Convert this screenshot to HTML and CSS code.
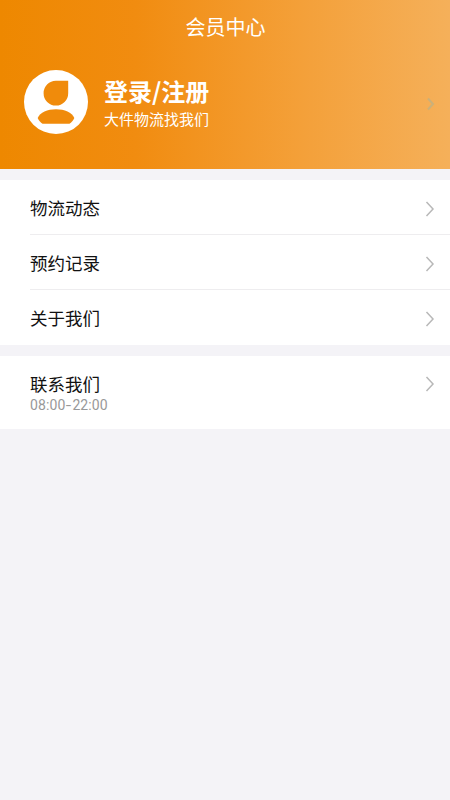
FILE: index.html
```html
<!DOCTYPE html>
<html lang="zh-CN">
<head>
<meta charset="utf-8">
<title>会员中心</title>
<link rel="stylesheet" href="styles.css">
</head>
<body>
<header class="header">
  <h1 class="title">会员中心</h1>
  <div class="profile">
    <svg class="avatar" viewBox="0 0 64 64">
      <circle cx="32" cy="32" r="32" fill="#fff"/>
      <path class="figure" d="M44.2 10.8H32A12.3 12.4 0 1 0 44.2 23.2Z"/>
      <path class="figure" d="M13.7 48C16 42.2 23.5 39.3 32 39.3S48 42.2 50.3 48C49.6 50.2 47.8 52.2 45.5 53.8H18.5C16.2 52.2 14.4 50.2 13.7 48Z"/>
    </svg>
    <div class="account">
      <div class="login">登录/注册</div>
      <div class="slogan">大件物流找我们</div>
    </div>
    <svg class="chevron chevron-header" viewBox="0 0 10 16"><path d="M2 2.5 7 8 2 13.5"/></svg>
  </div>
</header>
<main>
  <section class="group">
    <div class="row"><span>物流动态</span><svg class="chevron" viewBox="0 0 10 16"><path d="M1.5 1 8 8 1.5 15"/></svg></div>
    <div class="row"><span>预约记录</span><svg class="chevron" viewBox="0 0 10 16"><path d="M1.5 1 8 8 1.5 15"/></svg></div>
    <div class="row"><span>关于我们</span><svg class="chevron" viewBox="0 0 10 16"><path d="M1.5 1 8 8 1.5 15"/></svg></div>
  </section>
  <section class="group contact">
    <div class="contact-line"><span>联系我们</span><svg class="chevron" viewBox="0 0 10 16"><path d="M1.5 1 8 8 1.5 15"/></svg></div>
    <div class="hours">08:00<span class="dash">-</span>22:00</div>
  </section>
</main>
</body>
</html>
```
FILE: styles.css
```css
* { box-sizing: border-box; }
body {
  margin: 0;
  min-height: 800px;
  background: #f4f3f7;
  color: #111;
  font-family: Roboto, "Noto Sans CJK SC", sans-serif;
}
.header {
  height: 169px;
  color: #fff;
  background: linear-gradient(90deg, #ee8800 0%, #f18c10 30%, #f4a039 67%, #f5b05a 100%);
}
.title {
  margin: 0;
  padding: 13px 0 0 1px;
  height: 69px;
  font-size: 20px;
  line-height: 30px;
  font-weight: 400;
  text-align: center;
}
.profile {
  display: flex;
  height: 66px;
  padding: 0 14px 0 24px;
}
.avatar { width: 64px; height: 66px; flex: none; }
.figure { fill: #f08b0b; }
.account { flex: 1; padding: 7px 0 0 16px; }
.login { font-family: "Noto Sans CJK SC", sans-serif; font-size: 24px; line-height: 30px; font-weight: 700; }
.slogan { font-size: 15px; line-height: 28px; }
.chevron {
  width: 10px;
  height: 16px;
  flex: none;
  fill: none;
  stroke: #b8b8b8;
  stroke-width: 1.5;
}
.chevron-header { margin-top: 27px; stroke: #cbb079; stroke-width: 2; }
.group { margin-top: 11px; padding-left: 30px; background: #fff; }
.row {
  display: flex;
  align-items: center;
  justify-content: space-between;
  height: 55px;
  padding-right: 15px;
  border-bottom: 1px solid #eeedef;
  font-size: 17.5px;
}
.row .chevron { margin-top: 3px; }
.row:last-child { border-bottom: 0; }
.contact { height: 73px; padding-top: 14px; }
.contact-line {
  display: flex;
  align-items: center;
  justify-content: space-between;
  height: 27px;
  padding-right: 15px;
  font-size: 17.5px;
}
.hours { color: #999; font-family: Roboto, sans-serif; font-size: 14px; line-height: 16px; letter-spacing: 0.1px; }
.dash { display: inline-block; width: 7px; text-align: center; transform: scaleX(1.4); }
```
